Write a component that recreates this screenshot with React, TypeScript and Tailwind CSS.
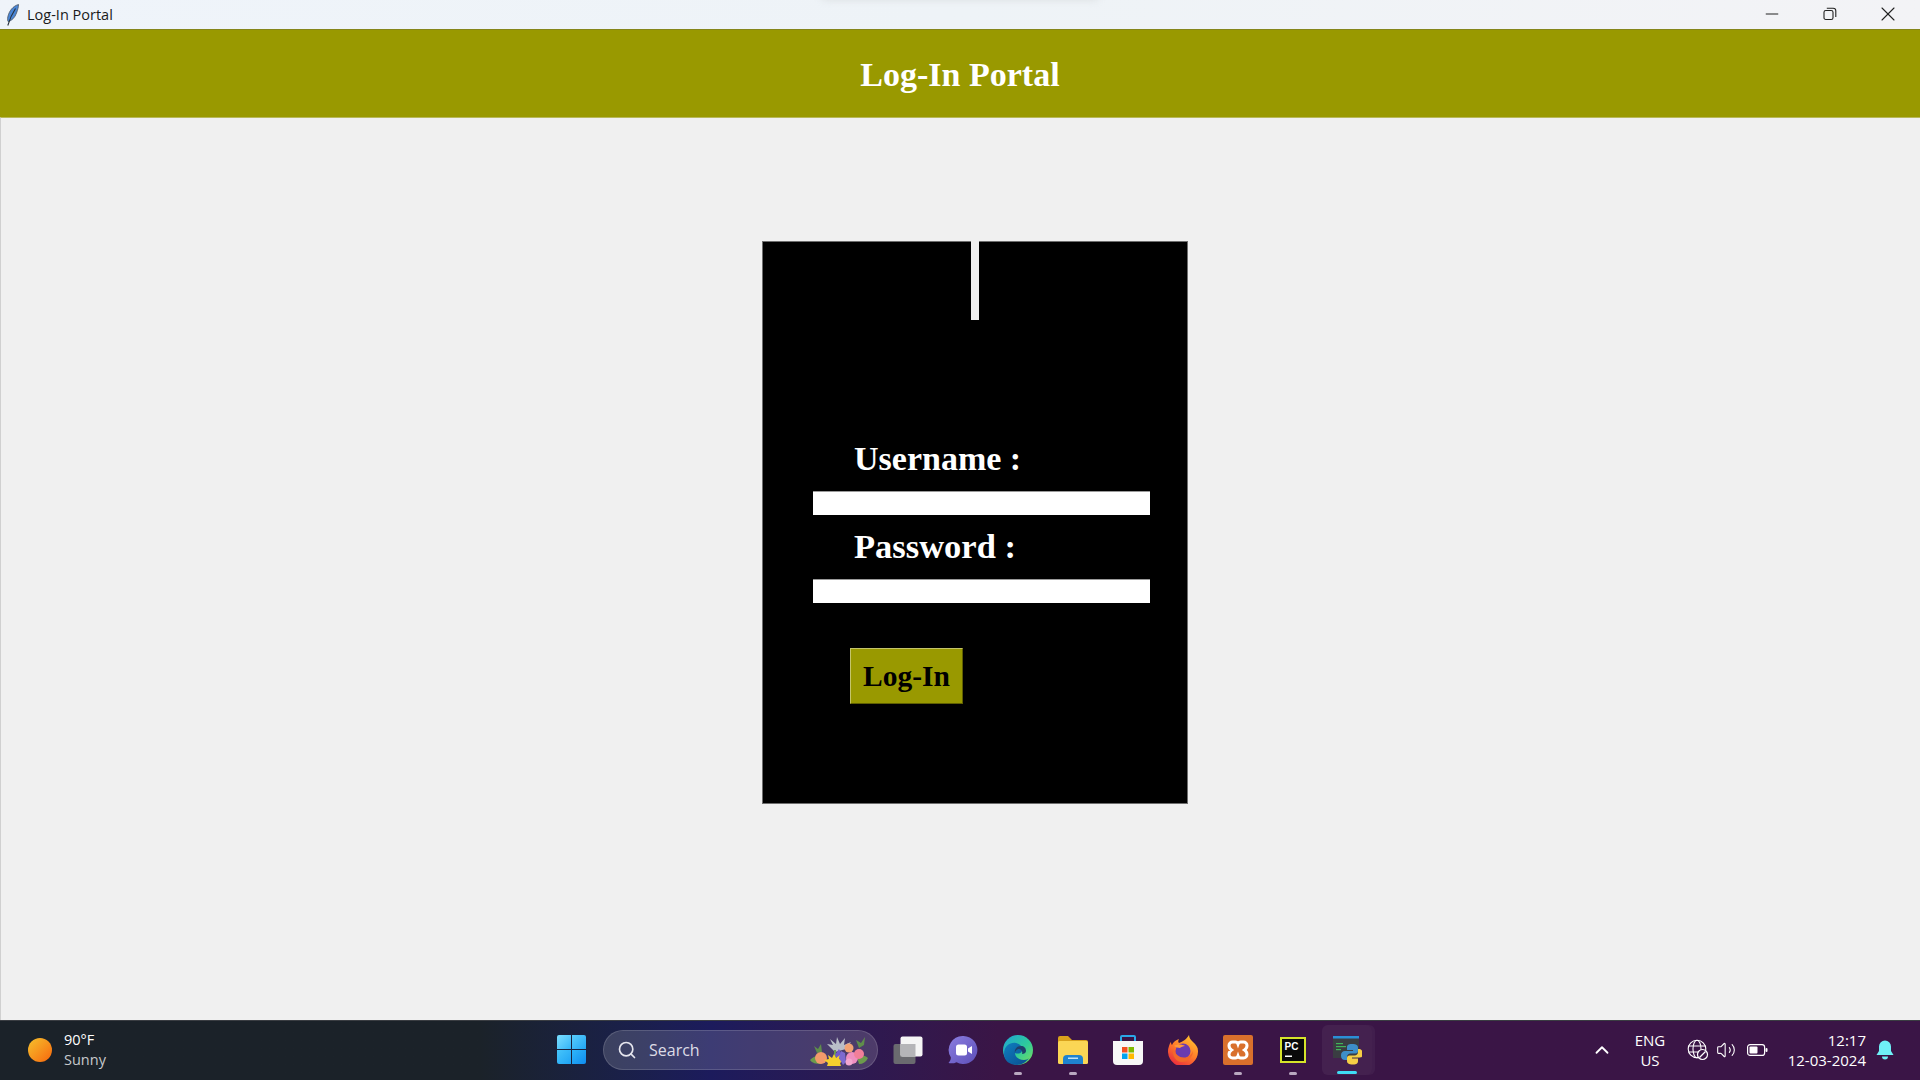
import { Search, ChevronUp, Volume2, Minus, X } from "lucide-react";

const UI_FONT = "font-['Open_Sans','Noto_Sans',sans-serif]";

function Feather() {
  return (
    <svg width="14" height="22" viewBox="0 0 14 22">
      <path d="M12.5 0.5C7 2 3 7 1.8 13c-.4 2-.3 3.6.4 4.6C6 16.5 9 13.5 10.5 9 11.6 6 12.6 3 12.5.5z" fill="#4a86d6" stroke="#4b5563" strokeWidth="0.8" />
      <path d="M9.5 4.5C6.5 9 4 14 1.8 21.5" fill="none" stroke="#26303c" strokeWidth="1.1" />
    </svg>
  );
}

function RestoreIcon() {
  return (
    <svg width="14" height="14" viewBox="0 0 14 14" fill="none" stroke="#222" strokeWidth="1.1">
      <rect x="1" y="3.5" width="9" height="9" rx="1.8" />
      <path d="M3.8 1.2h6.4a2.6 2.6 0 0 1 2.6 2.6v6.2" />
    </svg>
  );
}

function WindowsLogo() {
  return (
    <div className="grid grid-cols-2 gap-[1px] w-[29px] h-[29px]">
      <div className="bg-gradient-to-br from-[#7adfff] to-[#2fb4f7] rounded-tl-[2px]" />
      <div className="bg-gradient-to-br from-[#58cdfb] to-[#1da5f4] rounded-tr-[2px]" />
      <div className="bg-gradient-to-br from-[#46c5fa] to-[#1ca3f4] rounded-bl-[2px]" />
      <div className="bg-gradient-to-br from-[#2fb6f8] to-[#0f8cef] rounded-br-[2px]" />
    </div>
  );
}

function Flowers() {
  return (
    <svg width="62" height="32" viewBox="0 0 62 32">
      <path d="M2 26c4-4 8-5 12-3l-1 7C8 30 4 29 2 26zM60 24c-4-3-8-3-11-1l2 7c4 0 7-2 9-6z" fill="#6c9b4c" />
      <path d="M6 12l4 3 3-5 1 8-5 1zM48 6l5 3 4-6-1 8-5 3z" fill="#5f8d4b" />
      <path d="M27 18l-8-8 6 1-3-6 6 5 1-7 3 7 5-6-1 7 7-3-5 7z" fill="#b9bec8" />
      <rect x="26" y="16" width="2" height="8" fill="#6c9b4c" />
      <path d="M31 15l3 6-4 5-3-5z" fill="#6f5bc8" />
      <circle cx="13" cy="24" r="6" fill="#f29a6b" />
      <circle cx="41" cy="14" r="4.5" fill="#f2a273" />
      <path d="M26 20l2 4 4-3-1 4 5 1-4 3 1 3H19l1-3-4-3 5-1-1-4 4 3z" fill="#f4cf2e" />
      <path d="M33 17l4 2 1 9-3 3-4-7z" fill="#7c6ad0" />
      <circle cx="44" cy="24" r="6" fill="#ee8fc0" />
      <circle cx="51" cy="20" r="5" fill="#f27f99" />
      <circle cx="41" cy="28" r="3.5" fill="#f3a7cf" />
    </svg>
  );
}

function TaskView() {
  return (
    <svg width="30" height="28" viewBox="0 0 30 28">
      <rect x="0.5" y="8" width="22" height="20" rx="2" fill="#6a6a6f" />
      <rect x="7.5" y="0.5" width="22" height="20" rx="2" fill="#f5f5f5" />
      <rect x="7.5" y="8" width="15" height="12.5" fill="#b5b5b8" />
    </svg>
  );
}

function ChatIcon() {
  return (
    <svg width="30" height="30" viewBox="0 0 30 30">
      <defs>
        <linearGradient id="chat" x1="0" y1="0" x2="1" y2="1">
          <stop offset="0" stopColor="#8b7ee0" />
          <stop offset="1" stopColor="#5d4fb8" />
        </linearGradient>
      </defs>
      <path d="M15.5 1a14 14 0 1 1-7 26.2C6 28.5 3 28.6 0.5 28c1.5-1.5 2.5-3.5 2.3-5.7A14 14 0 0 1 15.5 1z" fill="url(#chat)" />
      <rect x="8" y="9.5" width="11" height="11" rx="2.5" fill="#fff" />
      <path d="M20 13.5l4-2.5v8l-4-2.5z" fill="#fff" />
    </svg>
  );
}

function EdgeIcon() {
  return (
    <svg width="30" height="30" viewBox="0 0 30 30">
      <defs>
        <linearGradient id="edgeA" x1="0" y1="0" x2="1" y2="1">
          <stop offset="0" stopColor="#1fa3d8" />
          <stop offset="0.55" stopColor="#2ecb9a" />
          <stop offset="1" stopColor="#7fe05a" />
        </linearGradient>
        <linearGradient id="edgeB" x1="0" y1="0" x2="1" y2="1">
          <stop offset="0" stopColor="#0f7fbf" />
          <stop offset="1" stopColor="#0a4c8f" />
        </linearGradient>
      </defs>
      <circle cx="15" cy="15" r="15" fill="url(#edgeA)" />
      <path d="M1 19C1 10 8 7 13 8c5 1 7 5 6 8-1 3-5 3-7 2 0 4 4 7 9 7 2 0 4-1 5-2-3 4-7 7-12 7C7 30 1 26 1 19z" fill="url(#edgeB)" />
      <path d="M12 18c-1-4 2-7 6-7 3 0 5 2 5 5 0 2-2 3-4 3 1-3-1-5-3-5-2 0-4 2-4 4z" fill="#1f3f6a" />
    </svg>
  );
}

function FolderIcon() {
  return (
    <svg width="30" height="28" viewBox="0 0 30 28">
      <path d="M0 2a2 2 0 0 1 2-2h8l4 4h14a2 2 0 0 1 2 2v4H0z" fill="#d9a21c" />
      <rect x="0" y="5" width="30" height="23" rx="1.5" fill="#fbd655" />
      <path d="M5 28v-5a4 4 0 0 1 4-4h12a4 4 0 0 1 4 4v5z" fill="#1f83cf" />
      <rect x="10" y="21.5" width="10" height="1.5" fill="#bfe3f8" />
    </svg>
  );
}

function StoreIcon() {
  return (
    <svg width="30" height="30" viewBox="0 0 30 30">
      <path d="M8 6V2a1 1 0 0 1 1-1h12a1 1 0 0 1 1 1v4" fill="none" stroke="#2aa8e8" strokeWidth="2" />
      <path d="M0 6h30v20a4 4 0 0 1-4 4H4a4 4 0 0 1-4-4z" fill="#f7f7f7" />
      <rect x="9" y="12" width="5.5" height="5.5" fill="#f25022" />
      <rect x="15.5" y="12" width="5.5" height="5.5" fill="#7fba00" />
      <rect x="9" y="18.5" width="5.5" height="5.5" fill="#00a4ef" />
      <rect x="15.5" y="18.5" width="5.5" height="5.5" fill="#ffb900" />
    </svg>
  );
}

function FirefoxIcon() {
  return (
    <svg width="30" height="30" viewBox="0 0 30 30">
      <defs>
        <linearGradient id="fox" x1="0.8" y1="0" x2="0.2" y2="1">
          <stop offset="0" stopColor="#ffc62e" />
          <stop offset="0.5" stopColor="#ff7a2a" />
          <stop offset="1" stopColor="#e8263f" />
        </linearGradient>
      </defs>
      <path d="M21 0c0 3 2 5 4 7 3 3 5 5 5 9a15 15 0 1 1-29-5c.5-1.5 1-3 2-4 0 1.5.5 2.5 1 3 1-3 4-5 7-6-1 2-1 3 0 4 3-1 7-3 10-8z" fill="url(#fox)" />
      <circle cx="15" cy="16" r="7.5" fill="#6a3bb0" />
      <path d="M5 14c2 6 8 10 14 8 3-1 5-3 6-6 0 6-5 11-11 11-6 0-10-6-9-13z" fill="#f2692b" />
      <path d="M6 11c3-2 8-2 11 0-2 0-4 1-5 2-2 0-4-1-6-2z" fill="#ff9a3a" />
    </svg>
  );
}

function XamppIcon() {
  return (
    <svg width="30" height="30" viewBox="0 0 30 30">
      <rect width="30" height="30" rx="2" fill="#d9702c" />
      <path d="M9.5 7h2.5a3 3 0 0 1 3 2 3 3 0 0 1 3-2h2.5a3.5 3.5 0 0 1 3.5 3.5c0 2-1 3.500-2.500 4.500 1.500 1 2.500 2.500 2.500 4.500a3.500 3.500 0 0 1-3.500 3.500H18a3 3 0 0 1-3-2 3 3 0 0 1-3 2H9.500A3.500 3.500 0 0 1 6 19.500c0-2 1-3.500 2.500-4.500C7 14 6 12.500 6 10.500A3.500 3.500 0 0 1 9.500 7z" fill="none" stroke="#fff" strokeWidth="3" />
    </svg>
  );
}

function PyCharmIcon() {
  return (
    <svg width="26" height="26" viewBox="0 0 26 26">
      <rect width="26" height="26" fill="#d6e32a" />
      <rect x="2" y="2" width="22" height="22" fill="#0a0a0a" />
      <text x="4.5" y="13" fontSize="10" fontWeight="700" fill="#fff" fontFamily="Liberation Sans, sans-serif">PC</text>
      <rect x="5" y="18.5" width="7" height="1.5" fill="#fff" />
    </svg>
  );
}

function PythonIcon() {
  return (
    <svg width="30" height="30" viewBox="0 0 30 30">
      <rect x="1" y="1" width="26" height="22" fill="#3a3d42" />
      <rect x="1" y="1" width="26" height="2.5" fill="#2b8fd6" />
      <rect x="4" y="8" width="7" height="1.2" fill="#42b45a" />
      <rect x="4" y="11" width="10" height="1.2" fill="#42b45a" />
      <rect x="4" y="14" width="5" height="1.2" fill="#42b45a" />
      <path d="M20 9c-4 0-5 1.5-5 3.5V15h6v1h-8c-2.5 0-4 1.5-4 4.5S10.5 25 13 25h2v-3c0-2 1.5-3.5 3.5-3.5h5c1.5 0 2.5-1 2.5-2.500v-3.500C26 10.500 24.500 9 20 9z" fill="#3d8ec9" />
      <path d="M21 29.500c4 0 5-1.500 5-3.500v-2.500h-6v-1h8c2.500 0 2.500-2 2.500-4.500S29 14 27 14h-1v3c0 2-1.500 3.500-3.500 3.500h-5c-1.500 0-2.500 1-2.500 2.500v3c0 2 1.500 3.500 6 3.500z" fill="#f6cf45" />
    </svg>
  );
}

function GlobeIcon() {
  return (
    <svg width="22" height="22" viewBox="0 0 22 22" fill="none" stroke="#fff" strokeWidth="1.1">
      <circle cx="10" cy="10" r="8.8" />
      <ellipse cx="10" cy="10" rx="4" ry="8.8" />
      <path d="M1.5 7h17M1.5 13h17" />
      <circle cx="15.5" cy="15.5" r="5" fill="#3a1546" strokeWidth="1.2" />
      <path d="M12.5 18.5l6-6" strokeWidth="1.2" />
    </svg>
  );
}

function BatteryIcon() {
  return (
    <svg width="21" height="14" viewBox="0 0 21 14">
      <rect x="0.6" y="1.6" width="17" height="10.8" rx="2.5" fill="none" stroke="#fff" strokeWidth="1.2" />
      <rect x="2.5" y="3.5" width="8" height="7" rx="1" fill="#fff" />
      <rect x="18.5" y="5" width="2" height="4" rx="1" fill="#fff" />
    </svg>
  );
}

function BellIcon() {
  return (
    <svg width="18" height="20" viewBox="0 0 18 20" fill="#6ff0f7">
      <path d="M9 0.5a6 6 0 0 1 6 6V11l2.5 4H0.5L3 11V6.5a6 6 0 0 1 6-6z" />
      <path d="M6 16.5h6a3 3 0 0 1-6 0z" />
    </svg>
  );
}

// отметка запущенного приложения под иконкой
function TaskButton({ children, dot }: { children: React.ReactNode; dot?: boolean }) {
  return (
    <div className="relative w-[55px] h-[58px] flex items-center justify-center">
      {children}
      {dot && <span className="absolute bottom-[4px] left-1/2 -translate-x-1/2 w-2 h-[3px] rounded-full bg-[#b9a8c0]" />}
    </div>
  );
}

export default function App() {
  return (
    <div className={`w-[1920px] h-[1080px] flex flex-col overflow-hidden bg-[#f0f0f0] ${UI_FONT}`}>
      {/* заголовок окна */}
      <div className="relative h-[29px] shrink-0 flex items-center bg-gradient-to-r from-[#eff4fa] via-[#eef3f7] to-[#f3f3f6]">
        <div className="absolute left-[820px] top-[-6px] w-[280px] h-[7px] bg-[#dfe3e6] rounded-b-lg blur-[3px]" />
        <div className="ml-[5px] w-[15px] flex justify-center">
          <Feather />
        </div>
        <span className="ml-[7px] text-[14.5px] text-[#1a1a1a]">Log-In Portal</span>
        <div className="ml-auto mr-[3px] flex items-center -mt-[1px]">
          <div className="w-[58px] flex justify-center"><Minus size={20} strokeWidth={1.2} color="#222" /></div>
          <div className="w-[58px] flex justify-center"><RestoreIcon /></div>
          <div className="w-[58px] flex justify-center"><X size={24} strokeWidth={1.1} color="#222" /></div>
        </div>
      </div>

      {/* шапка */}
      <div className="h-[88px] shrink-0 pt-[2px] flex items-center justify-center bg-[#999900] border-t border-[#85851a] font-['Liberation_Serif',serif]">
        <h1 className="text-[34px] font-bold text-white">Log-In Portal</h1>
      </div>

      {/* форма */}
      <div className="flex-1 border-l border-[#d0d0d0] border-t border-t-[#b8b85a] pt-[123px] pl-[761px] font-['Liberation_Serif',serif]">
        <div className="w-[426px] h-[563px] bg-black border border-[#6e6e6e] flex flex-col">
          <div className="mx-auto w-[8px] h-[79px] shrink-0 -mt-px bg-[#f0f0f0]" />
          <div className="pl-[91px] mt-[117px] text-[34px] leading-[44px] font-bold text-white">Username :</div>
          <input className="ml-[49.5px] mt-[10px] w-[337px] h-[24px] bg-white border-t border-[#9a9a9a] outline-none" type="text" />
          <div className="pl-[91px] mt-[9px] text-[34.5px] leading-[44px] font-bold text-white">Password :</div>
          <input className="ml-[49.5px] mt-[11px] w-[337px] h-[24px] bg-white border-t border-[#9a9a9a] outline-none" type="password" />
          <button className="ml-[87px] mt-[45px] w-[113px] h-[56px] bg-[#999900] border border-t-[#c4c46a] border-l-[#c4c46a] border-r-[#5f5f00] border-b-[#5f5f00] text-[29.5px] font-bold text-black">
            Log-In
          </button>
        </div>
      </div>

      {/* панель задач */}
      <div className="h-[60px] shrink-0 pb-[2px] flex items-center border-t border-[#3a3d42] bg-gradient-to-r from-[#1b2229] from-25% via-[#1c1b5c] via-37% to-[#3a1546] to-52% text-white">
        <div className="w-[549px] shrink-0 pl-[28px] flex items-center gap-[12px]">
          <div className="w-[24px] h-[24px] rounded-full bg-gradient-to-br from-[#f3c02c] to-[#f5640c]" />
          <div className="flex flex-col text-[14.5px] leading-[20px]">
            <span>90°F</span>
            <span className="text-[#c6c9cc]">Sunny</span>
          </div>
        </div>
        <div className="w-[44px] shrink-0 flex justify-center"><WindowsLogo /></div>
        <div className="ml-[10px] w-[275px] h-[40px] shrink-0 flex items-center rounded-full bg-[#fff]/15 border border-white/15 pl-[13px] pr-[7px]">
          <Search size={20} strokeWidth={2} color="#e6e6ee" />
          <span className="ml-[12px] text-[16px] text-[#dcdce6]">Search</span>
          <div className="ml-auto"><Flowers /></div>
        </div>
        <div className="ml-[2px] flex items-center">
          <TaskButton><TaskView /></TaskButton>
          <TaskButton><ChatIcon /></TaskButton>
          <TaskButton dot><EdgeIcon /></TaskButton>
          <TaskButton dot><FolderIcon /></TaskButton>
          <TaskButton><StoreIcon /></TaskButton>
          <TaskButton><FirefoxIcon /></TaskButton>
          <TaskButton dot><XamppIcon /></TaskButton>
          <TaskButton dot><PyCharmIcon /></TaskButton>
          <div className="relative ml-[2px] w-[50px] h-[50px] flex items-center justify-center rounded-md bg-white/5 shadow-[3px_0_0_rgba(255,255,255,0.04)]">
            <PythonIcon />
            <span className="absolute bottom-[1px] left-1/2 -translate-x-1/2 w-[20px] h-[3px] rounded-full bg-[#3fdcf5]" />
          </div>
        </div>
        <div className="ml-auto flex items-center">
          <ChevronUp size={22} strokeWidth={2} color="#fff" />
          <div className="ml-[17px] w-[40px] flex flex-col items-center text-[15px] leading-[20px]">
            <span>ENG</span>
            <span>US</span>
          </div>
          <div className="ml-[17px]"><GlobeIcon /></div>
          <div className="ml-[7px]"><Volume2 size={20} strokeWidth={1.3} color="#fff" /></div>
          <div className="ml-[11px]"><BatteryIcon /></div>
          <div className="ml-[14px] w-[84px] flex flex-col items-end text-[15px] leading-[20px]">
            <span>12:17</span>
            <span>12-03-2024</span>
          </div>
          <div className="ml-[10px] mr-[26px]"><BellIcon /></div>
        </div>
      </div>
    </div>
  );
}
